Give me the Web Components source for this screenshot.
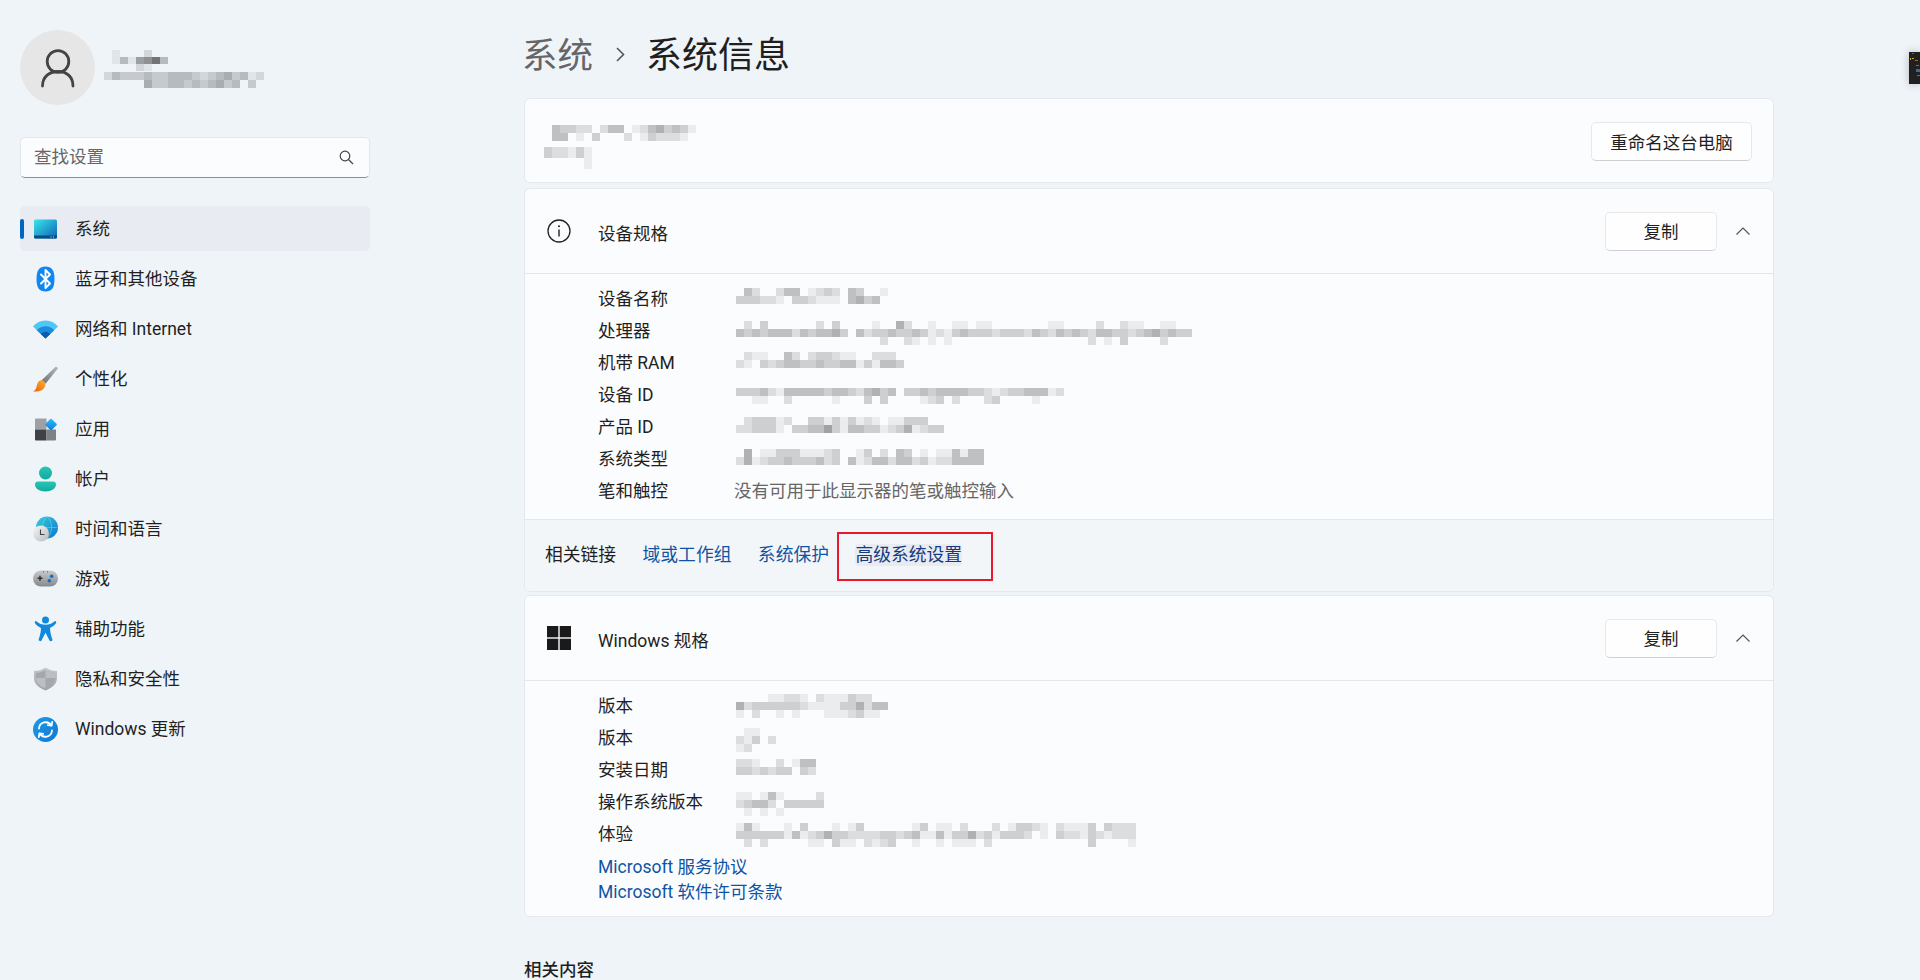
<!DOCTYPE html>
<html lang="zh-CN">
<head>
<meta charset="utf-8">
<title>系统信息</title>
<style>
  html, body {
    margin: 0;
    height: 980px;
    overflow: hidden;
    background: #eff4f9;
    color: #1f1f1f;
    font: 17.5px/25px Roboto, "Noto Sans CJK SC", sans-serif;
  }
</style>
</head>
<body>
<settings-page>
  <settings-sidebar slot="side">
    <user-profile></user-profile>
    <search-box>查找设置</search-box>
    <nav-item icon="system" selected>系统</nav-item>
    <nav-item icon="bluetooth">蓝牙和其他设备</nav-item>
    <nav-item icon="wifi">网络和 Internet</nav-item>
    <nav-item icon="brush">个性化</nav-item>
    <nav-item icon="apps">应用</nav-item>
    <nav-item icon="account">帐户</nav-item>
    <nav-item icon="time">时间和语言</nav-item>
    <nav-item icon="games">游戏</nav-item>
    <nav-item icon="access">辅助功能</nav-item>
    <nav-item icon="shield">隐私和安全性</nav-item>
    <nav-item icon="update">Windows 更新</nav-item>
  </settings-sidebar>

  <page-title parent="系统">系统信息</page-title>

  <device-card>
    <pixel-blur slot="name" data="433220244012453431|440103000201322210"></pixel-blur>
    <pixel-blur slot="sub" data="322131|000001" top="6" cell-h="11"></pixel-blur>
    <win-button slot="action">重命名这台电脑</win-button>
  </device-card>

  <expander-card heading="设备规格" icon="info" body-bottom="13">
    <spec-row label="设备名称"><pixel-blur top="6" data="0420024401232043001|333221033211104534"></pixel-blur></spec-row>
    <spec-row label="处理器"><pixel-blur top="7" data="020300000020300001005200100110110000000110000200211001100|434344424344530423343343121343332333243243432443323453433|000000000000000000200210101000000000000000002010300002000"></pixel-blur></spec-row>
    <spec-row label="机带 RAM"><pixel-blur top="6" data="021100420233211002220|210323443343344131443"></pixel-blur></spec-row>
    <spec-row label="设备 ID"><pixel-blur top="10" data="33342144444344324534033434444332123344412|00110020000010003030000123020002300001000"></pixel-blur></spec-row>
    <spec-row label="产品 ID"><pixel-blur top="7" data="02333120033131312101133300|22333103344631443312351233"></pixel-blur></spec-row>
    <spec-row label="系统类型"><pixel-blur top="7" data="05011333111230013020430101141440|25123343334230412442442312244440"></pixel-blur></spec-row>
    <spec-row label="笔和触控"><span style="color:#666;margin-left:-2px;padding-top:1px">没有可用于此显示器的笔或触控输入</span></spec-row>
    <related-links slot="footer">
      <span>相关链接</span>
      <link-text>域或工作组</link-text>
      <link-text>系统保护</link-text>
      <link-text hover framed>高级系统设置</link-text>
    </related-links>
  </expander-card>

  <expander-card heading="Windows 规格" icon="windows" body-bottom="11">
    <spec-row label="版本"><pixel-blur top="5" data="0000112210211132200|5233333321111335244|1020010100011123110"></pixel-blur></spec-row>
    <spec-row label="版本"><pixel-blur top="7" data="01100|21302|12000"></pixel-blur></spec-row>
    <spec-row label="安装日期"><pixel-blur top="6" data="2210020144|3323233032"></pixel-blur></spec-row>
    <spec-row label="操作系统版本"><pixel-blur top="7" data="11014100002|23442033333|01010100000"></pixel-blur></spec-row>
    <spec-row label="体验"><pixel-blur top="6" data="14100010300010130000001301102000201332102111303222|33333314123533222233234114133523133320103221321222|02020000011031102123001001011102000000000000300001"></pixel-blur></spec-row>
    <link-text block style="margin-top:6px">Microsoft 服务协议</link-text>
    <link-text block>Microsoft 软件许可条款</link-text>
  </expander-card>

  <section-label>相关内容</section-label>

  <window-peek></window-peek>
</settings-page>

<script>
// Fluent style colour icons for the sidebar, drawn on a 28 box
const ICONS = {
  system: `<defs><linearGradient id="a" x1="0" y1="0" x2="1" y2="1"><stop offset="0" stop-color="#3ae6ea"/><stop offset="1" stop-color="#0a62b6"/></linearGradient></defs>
    <rect x="2" y="4.5" width="23" height="19" rx="1.5" fill="url(#a)"/>
    <path d="M2 20.5h23v1.5a1.5 1.5 0 0 1-1.5 1.5h-20a1.5 1.5 0 0 1-1.5-1.5z" fill="#0b4c80"/>
    <path d="M18.5 22h1M21 22h1" stroke="#bfe3f5" stroke-width="1"/>`,
  bluetooth: `<path d="M13.5 1.5C19.5 1.5 22.5 5 22.5 14S19.5 26.5 13.5 26.5 4.5 23 4.5 14 7.5 1.5 13.5 1.5z" fill="#0f86f2"/>
    <path d="M9 9.5l9 9-4.5 4.5V5l4.5 4.5-9 9" fill="none" stroke="#fff" stroke-width="1.9" stroke-linejoin="round" stroke-linecap="round"/>`,
  wifi: `<path d="M1 11.5C7 3.5 20 3.5 26 11.5L13.5 23.5z" fill="#4cc7f6"/>
    <path d="M4.8 15.2C9.5 9.8 17.5 9.8 22.2 15.2L13.5 23.5z" fill="#1c8be0"/>
    <path d="M8.8 19C11.3 16 15.7 16 18.2 19L13.5 23.5z" fill="#0b5dab"/>`,
  brush: `<defs><linearGradient id="a" x1="1" y1="0" x2="0" y2="1"><stop offset="0" stop-color="#b5b8bc"/><stop offset="1" stop-color="#6d7075"/></linearGradient>
    <linearGradient id="b" x1="1" y1="0" x2="0" y2="1"><stop offset="0" stop-color="#fdb02e"/><stop offset="1" stop-color="#e8640e"/></linearGradient></defs>
    <path d="M23.6 1.8c1-.6 2.6.9 2.1 2L13.6 18.7 9.6 15.2z" fill="url(#a)"/>
    <path d="M9.2 15C6 15.8 5 19 4.6 21.8 4.2 24.2 2.6 25.6 1 26.4c5.5.7 11-.8 12.4-6 .4-1.8-2.4-5.6-4.2-5.4z" fill="url(#b)"/>`,
  apps: `<defs><linearGradient id="a" x1="0" y1="0" x2="1" y2="1"><stop offset="0" stop-color="#2ac0fa"/><stop offset="1" stop-color="#0e7bdc"/></linearGradient></defs>
    <path d="M4 3.5h10.5v11H3V4.5a1 1 0 0 1 1-1z" fill="#9da1a6"/>
    <path d="M3 14.5h11.5v11H4a1 1 0 0 1-1-1z" fill="#3f4144"/>
    <path d="M14.5 14.5H24v10a1 1 0 0 1-1 1h-8.5z" fill="#7e8287"/>
    <rect x="14.6" y="5.1" width="8.8" height="8.8" rx="1" transform="rotate(45 19 9.5)" fill="url(#a)"/>`,
  account: `<defs><linearGradient id="a" x1="0" y1="0" x2="0" y2="1"><stop offset="0" stop-color="#27c7b6"/><stop offset="1" stop-color="#12a99c"/></linearGradient></defs>
    <circle cx="13.5" cy="8" r="6.5" fill="url(#a)"/>
    <path d="M6 16.5h15a3 3 0 0 1 3 3c0 4-4.5 7-10.5 7S3 23.5 3 19.5a3 3 0 0 1 3-3z" fill="url(#a)"/>`,
  time: `<defs><linearGradient id="a" x1="0" y1="0" x2="1" y2="1"><stop offset="0" stop-color="#34d2d8"/><stop offset="1" stop-color="#0f74cf"/></linearGradient>
    <linearGradient id="b" x1="0" y1="0" x2="1" y2="1"><stop offset="0" stop-color="#f7f7f7"/><stop offset="1" stop-color="#b8babd"/></linearGradient></defs>
    <circle cx="15" cy="12.5" r="11" fill="url(#a)"/>
    <path d="M4.5 12.5h21M15 1.5c-6 5-6 16 0 22M15 1.5c6 5 6 16 0 22" fill="none" stroke="#8fe3ec" stroke-width=".6" opacity=".7"/>
    <circle cx="9" cy="18.5" r="8" fill="url(#b)"/>
    <path d="M8.5 14.5v5h4" fill="none" stroke="#444" stroke-width="1.1"/>`,
  games: `<defs><linearGradient id="a" x1="0" y1="0" x2="0" y2="1"><stop offset="0" stop-color="#c9cbce"/><stop offset="1" stop-color="#85888c"/></linearGradient></defs>
    <rect x="1" y="5.5" width="25" height="16" rx="8" fill="url(#a)"/>
    <path d="M5.5 13.2h5M8 10.7v5" stroke="#333" stroke-width="1.5"/>
    <circle cx="19.7" cy="11.2" r="1.8" fill="#0f6fc8"/><circle cx="17.3" cy="15.8" r="1.8" fill="#0f6fc8"/>
    <circle cx="11.5" cy="6.8" r=".6" fill="#555"/><circle cx="15.5" cy="6.8" r=".6" fill="#555"/>`,
  access: `<circle cx="13.5" cy="5" r="3.5" fill="#1088dd"/>
    <path d="M4.3 6.2C7 8.6 10 9.8 13.5 9.8S20 8.6 22.7 6.2c1-.6 2 .8 1.3 2-1.5 2-3.8 3.7-6 4.8 0 4 1.5 9 2.5 12-.5 1.5-2.5 1.5-3 .5l-4-7.8-4 7.8c-.5 1-2.5 1-3-.5 1-3 2.5-8 2.5-12C6.8 11.9 4.5 10.2 3 8.2c-.7-1.2.3-2.6 1.3-2z" fill="#1088dd"/>`,
  shield: `<defs><linearGradient id="a" x1="0" y1="0" x2="0" y2="1"><stop offset="0" stop-color="#c6c9cc"/><stop offset="1" stop-color="#a0a3a7"/></linearGradient></defs>
    <path d="M13.5 2.5C17 5 21 6 25 6v7c0 6-5 10-11.5 12.5C7 23 2 19 2 13V6c4 0 8-1 11.5-3.5z" fill="url(#a)"/>
    <path d="M13.5 5C16.5 6.8 19.5 7.8 23 8v5c0 5-4.5 8.5-9.5 10.3C8.5 21.5 4 18 4 13V8c3.5-.2 6.5-1.2 9.5-3z" fill="#a5a8ac"/>
    <path d="M13.5 5C16.5 6.8 19.5 7.8 23 8v5h-9.5zM4 13h9.5v10.3C8.5 21.5 4 18 4 13z" fill="#bcbfc3"/>`,
  update: `<defs><linearGradient id="a" x1="0" y1="0" x2="1" y2="1"><stop offset="0" stop-color="#1f9be8"/><stop offset="1" stop-color="#0e78d2"/></linearGradient></defs>
    <circle cx="13.5" cy="14.5" r="12.5" fill="url(#a)"/>
    <g fill="none" stroke="#fff" stroke-width="1.8" stroke-linecap="round" stroke-linejoin="round">
      <path d="M7 13.5a6.7 6.7 0 0 1 12.4-3"/><path d="M20.2 6.8l-.6 3.9-3.8-.5"/>
      <path d="M20 15.5a6.7 6.7 0 0 1-12.4 3"/><path d="M6.8 22.2l.6-3.9 3.8.5"/>
    </g>`
};

const CHEVRON_UP = `<svg width="14" height="8" viewBox="0 0 14 8"><path d="M.5 7.5L7 1l6.5 6.5" fill="none" stroke="#555" stroke-width="1.2"/></svg>`;

const HEADER_ICONS = {
  info: `<svg width="24" height="24" viewBox="0 0 24 24"><circle cx="12" cy="12" r="11" fill="none" stroke="#222" stroke-width="1.3"/><path d="M12 10.5v7" stroke="#222" stroke-width="1.4"/><circle cx="12" cy="7.3" r="1" fill="#222"/></svg>`,
  windows: `<svg width="24" height="24" viewBox="0 0 24 24" fill="#1a1a1a"><rect width="11.3" height="11.3"/><rect x="12.7" width="11.3" height="11.3"/><rect y="12.7" width="11.3" height="11.3"/><rect x="12.7" y="12.7" width="11.3" height="11.3"/></svg>`
};

class SettingsPage extends HTMLElement {
  constructor() {
    super();
    this.attachShadow({ mode: 'open' });
    this.shadowRoot.innerHTML = `
      <style>
        :host { display: flex; height: 980px; overflow: hidden; }
        main { width: 1250px; flex: none; display: flex; flex-direction: column; }
        ::slotted(*) { flex: none; }
      </style>
      <slot name="side"></slot>
      <main><slot></slot></main>
    `;
  }
}

class SettingsSidebar extends HTMLElement {
  constructor() {
    super();
    this.attachShadow({ mode: 'open' });
    this.shadowRoot.innerHTML = `
      <style>
        :host {
          display: flex;
          flex-direction: column;
          gap: 5px;
          box-sizing: border-box;
          width: 524px;
          flex: none;
          padding: 30px 154px 0 20px;
        }
      </style>
      <slot></slot>
    `;
  }
}

class UserProfile extends HTMLElement {
  constructor() {
    super();
    this.attachShadow({ mode: 'open' });
    this.shadowRoot.innerHTML = `
      <style>
        :host { display: flex; margin-bottom: 27px; }
        .avatar { width: 75px; height: 75px; border-radius: 50%; background: #e6e6e6; }
        .who { margin-left: 9px; padding-top: 20px; }
        .name { margin-left: 8px; }
      </style>
      <svg class="avatar" viewBox="0 0 75 75">
        <circle cx="38" cy="31.5" r="10.8" fill="none" stroke="#444" stroke-width="2.8"/>
        <path d="M22.5 56c0-9 6.5-14.5 15.5-14.5S53 47 53 56" fill="none" stroke="#444" stroke-width="2.8" stroke-linecap="round"/>
      </svg>
      <div class="who">
        <pixel-blur class="name" cell-h="7" data="1000200|1416794|0002100"></pixel-blur>
        <pixel-blur data="24333433444323453412|00000533443434534030" top="1"></pixel-blur>
      </div>
    `;
  }
}

class SearchBox extends HTMLElement {
  constructor() {
    super();
    this.attachShadow({ mode: 'open' });
    this.shadowRoot.innerHTML = `
      <style>
        :host {
          display: flex;
          align-items: center;
          justify-content: space-between;
          box-sizing: border-box;
          height: 41px;
          margin-bottom: 23px;
          padding: 0 15px 0 13px;
          background: #fbfcfe;
          border: 1px solid #e4e6ea;
          border-bottom-color: #8e8e8e;
          border-radius: 5px;
          color: #666;
        }
      </style>
      <slot></slot>
      <svg width="15" height="15" viewBox="0 0 15 15"><circle cx="6" cy="6" r="4.8" fill="none" stroke="#444" stroke-width="1.2"/><path d="M9.5 9.5l4.5 4.5" stroke="#444" stroke-width="1.2"/></svg>
    `;
  }
}

class NavItem extends HTMLElement {
  connectedCallback() {
    if (this.shadowRoot) return;
    this.attachShadow({ mode: 'open' });
    const selected = this.hasAttribute('selected');
    this.shadowRoot.innerHTML = `
      <style>
        :host {
          display: flex;
          align-items: center;
          position: relative;
          height: 45px;
          padding-left: 12px;
          gap: 15px;
          border-radius: 5px;
          background: ${selected ? '#e8ebf1' : 'transparent'};
        }
        .label { padding-top: 2px; }
        .bar {
          position: absolute;
          left: 0;
          top: 13px;
          width: 4px;
          height: 20px;
          border-radius: 2px;
          background: #0067c0;
        }
      </style>
      ${selected ? '<span class="bar"></span>' : ''}
      <svg width="28" height="28" viewBox="0 0 28 28">${ICONS[this.getAttribute('icon')]}</svg>
      <span class="label"><slot></slot></span>
    `;
  }
}

class PageTitle extends HTMLElement {
  connectedCallback() {
    if (this.shadowRoot) return;
    this.attachShadow({ mode: 'open' });
    this.shadowRoot.innerHTML = `
      <style>
        :host {
          display: flex;
          align-items: center;
          height: 52px;
          margin: 28px 0 18px;
          font-size: 36px;
          line-height: 52px;
        }
        span { padding-top: 4px; }
        .parent { color: #666; font-size: 35.5px; margin-left: -2px; }
        svg { margin: 0 21px 0 23px; }
      </style>
      <span class="parent">${this.getAttribute('parent')}</span>
      <svg width="9" height="15" viewBox="0 0 9 15"><path d="M1 1l6.5 6.5L1 14" fill="none" stroke="#555" stroke-width="1.6"/></svg>
      <span><slot></slot></span>
    `;
  }
}

class DeviceCard extends HTMLElement {
  constructor() {
    super();
    this.attachShadow({ mode: 'open' });
    this.shadowRoot.innerHTML = `
      <style>
        :host {
          display: flex;
          justify-content: space-between;
          box-sizing: border-box;
          height: 85px;
          margin-bottom: 5px;
          padding: 26px 21px 0 19px;
          background: #fbfcfe;
          border: 1px solid #e5e8ec;
          border-radius: 6px;
        }
        .names { display: flex; flex-direction: column; align-items: flex-start; }
        .first { margin-left: 8px; }
        .act { margin-top: -3px; }
      </style>
      <div class="names">
        <div class="first"><slot name="name"></slot></div>
        <slot name="sub"></slot>
      </div>
      <div class="act"><slot name="action"></slot></div>
    `;
  }
}

class ExpanderCard extends HTMLElement {
  connectedCallback() {
    if (this.shadowRoot) return;
    this.attachShadow({ mode: 'open' });
    this.shadowRoot.innerHTML = `
      <style>
        :host {
          display: block;
          margin-bottom: 3px;
          background: #fbfcfe;
          border: 1px solid #e5e8ec;
          border-radius: 6px;
          overflow: hidden;
        }
        header {
          display: flex;
          align-items: center;
          height: 84px;
          padding: 0 23px 0 22px;
          border-bottom: 1px solid #e5e7eb;
        }
        .title { margin: 6px 0 0 27px; flex: 1; }
        .chev { margin-left: 19px; display: flex; }
        .body { padding: 8px 0 ${this.getAttribute('body-bottom')}px 73px; }
      </style>
      <header>
        ${HEADER_ICONS[this.getAttribute('icon')]}
        <span class="title">${this.getAttribute('heading')}</span>
        <win-button wide>复制</win-button>
        <span class="chev">${CHEVRON_UP}</span>
      </header>
      <div class="body"><slot></slot></div>
      <slot name="footer"></slot>
    `;
  }
}

class WinButton extends HTMLElement {
  connectedCallback() {
    if (this.shadowRoot) return;
    this.attachShadow({ mode: 'open' });
    this.shadowRoot.innerHTML = `
      <style>
        :host {
          display: inline-flex;
          align-items: center;
          justify-content: center;
          box-sizing: border-box;
          height: 39px;
          padding-top: 3px;
          width: ${this.hasAttribute('wide') ? '112px' : '161px'};
          background: #fefefe;
          border: 1px solid #e8e8eb;
          border-bottom-color: #d0d0d4;
          border-radius: 5px;
        }
      </style>
      <slot></slot>
    `;
  }
}

class SpecRow extends HTMLElement {
  connectedCallback() {
    if (this.shadowRoot) return;
    this.attachShadow({ mode: 'open' });
    this.shadowRoot.innerHTML = `
      <style>
        :host { display: flex; height: 32px; line-height: 32px; }
        .label { width: 138px; flex: none; padding-top: 1px; }
      </style>
      <span class="label">${this.getAttribute('label')}</span>
      <slot></slot>
    `;
  }
}

class RelatedLinks extends HTMLElement {
  constructor() {
    super();
    this.attachShadow({ mode: 'open' });
    this.shadowRoot.innerHTML = `
      <style>
        :host {
          display: flex;
          align-items: center;
          gap: 26.4px;
          height: 72px;
          padding: 0 20px 2px;
          box-sizing: border-box;
          background: #f3f6f9;
          border-top: 1px solid #e5e7eb;
          font-size: 17.8px;
        }
      </style>
      <slot></slot>
    `;
  }
}

class LinkText extends HTMLElement {
  connectedCallback() {
    if (this.shadowRoot) return;
    this.attachShadow({ mode: 'open' });
    const hover = this.hasAttribute('hover');
    this.shadowRoot.innerHTML = `
      <style>
        :host {
          display: ${this.hasAttribute('block') ? 'block' : 'inline-block'};
          position: relative;
          color: ${hover ? '#143a7e' : '#0f54a4'};
          ${hover ? 'background: #e8ebf2; border-radius: 4px; line-height: 22px;' : ''}
        }
        .frame {
          position: absolute;
          left: -18px;
          right: -31px;
          top: -11.5px;
          bottom: -15.5px;
          border: 2.5px solid #e8192c;
          box-sizing: border-box;
        }
      </style>
      <slot></slot>
      ${this.hasAttribute('framed') ? '<span class="frame"></span>' : ''}
    `;
  }
}

class SectionLabel extends HTMLElement {
  constructor() {
    super();
    this.attachShadow({ mode: 'open' });
    this.shadowRoot.innerHTML = `
      <style>
        :host { display: block; margin-top: 40px; line-height: 20px; font-weight: 500; }
      </style>
      <slot></slot>
    `;
  }
}

// The screenshot has pixelated personal data: each digit is the darkness of one block
class PixelBlur extends HTMLElement {
  connectedCallback() {
    if (this.shadowRoot) return;
    this.attachShadow({ mode: 'open' });
    const w = 8;
    const h = Number(this.getAttribute('cell-h') || 8);
    const rows = this.getAttribute('data').split('|');
    const cols = Math.max(...rows.map(r => r.length));
    let rects = '';
    rows.forEach((row, y) => {
      [...row].forEach((d, x) => {
        if (d !== '0') rects += `<rect x="${x * w}" y="${y * h}" width="${w}" height="${h}" fill="#666" opacity="${d / 10}"/>`;
      });
    });
    this.shadowRoot.innerHTML = `
      <style>
        :host { display: block; margin-top: ${this.getAttribute('top') || 0}px; height: ${rows.length * h}px; line-height: 0; }
        svg { filter: blur(.4px); }
      </style>
      <svg width="${cols * w}" height="${rows.length * h}">${rects}</svg>
    `;
  }
}

// Edge of another window that sticks in from the right
class WindowPeek extends HTMLElement {
  constructor() {
    super();
    this.attachShadow({ mode: 'open' });
    this.shadowRoot.innerHTML = `
      <style>
        :host {
          position: fixed;
          left: 1909px;
          top: 52px;
          width: 11px;
          height: 32px;
          background: #202020;
          box-shadow: 0 0 8px rgba(0, 0, 0, .25);
        }
      </style>
      <svg width="11" height="32">
        <rect x="3" y="1" width="2" height="1" fill="#2b6ea8"/>
        <rect x="3" y="6" width="2" height="1" fill="#caa23a"/>
        <rect x="1" y="6" width="1" height="2" fill="#d9a441"/>
        <rect x="6" y="8" width="3" height="1" fill="#a0673a"/>
        <rect x="7" y="13" width="3" height="1" fill="#8a6a55"/>
        <rect x="7" y="17" width="4" height="3" fill="#2f6fa8"/>
        <rect x="8" y="23" width="3" height="1" fill="#8a6a55"/>
      </svg>
    `;
  }
}

customElements.define('settings-page', SettingsPage);
customElements.define('settings-sidebar', SettingsSidebar);
customElements.define('user-profile', UserProfile);
customElements.define('search-box', SearchBox);
customElements.define('nav-item', NavItem);
customElements.define('page-title', PageTitle);
customElements.define('device-card', DeviceCard);
customElements.define('expander-card', ExpanderCard);
customElements.define('win-button', WinButton);
customElements.define('spec-row', SpecRow);
customElements.define('related-links', RelatedLinks);
customElements.define('link-text', LinkText);
customElements.define('section-label', SectionLabel);
customElements.define('pixel-blur', PixelBlur);
customElements.define('window-peek', WindowPeek);
</script>
</body>
</html>
